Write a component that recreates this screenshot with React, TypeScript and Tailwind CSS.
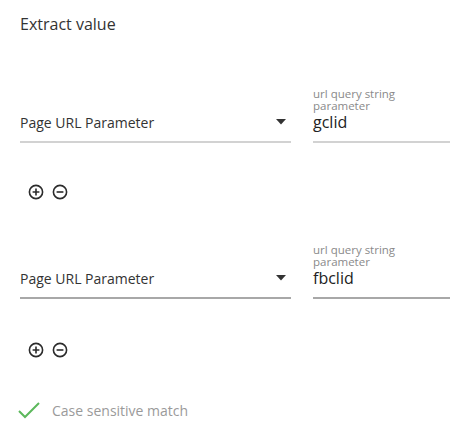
import React from "react";

function PlusCircle() {
  return (
    <svg width="16" height="16" viewBox="0 0 16 16" fill="none" stroke="#2b2b2b" strokeWidth="1.6">
      <circle cx="8" cy="8" r="6.6" />
      <path d="M8 4.6v6.8M4.6 8h6.8" />
    </svg>
  );
}
function MinusCircle() {
  return (
    <svg width="16" height="16" viewBox="0 0 16 16" fill="none" stroke="#2b2b2b" strokeWidth="1.6">
      <circle cx="8" cy="8" r="6.6" />
      <path d="M4.6 8h6.8" />
    </svg>
  );
}

function Row({ value, line }: { value: string; line: string }) {
  return (
    <div className="flex items-end">
      <div className="w-[271px] shrink-0">
        <div className="flex items-center justify-between h-[20px] pr-[5px]">
          <span className="text-[14px] text-[#333]">Page URL Parameter</span>
          <svg width="10" height="6" viewBox="0 0 10 6"><path d="M0 0h10L5 5.5z" fill="#333" /></svg>
        </div>
        <div className={`mt-[9px] h-[2px] ${line}`} />
      </div>
      <div className="ml-[22px] flex-1">
        <div className="text-[11.5px] leading-[12px] text-[#8a8a8a]">url query string<br />parameter</div>
        <div className="h-[20px] leading-[20px] text-[16px] text-[#222]">{value}</div>
        <div className={`mt-[9px] h-[2px] ${line}`} />
      </div>
    </div>
  );
}

function Icons() {
  return (
    <div className="flex gap-[8px] pl-[8px]">
      <PlusCircle />
      <MinusCircle />
    </div>
  );
}

export default function App() {
  return (
    <div className="w-[450px] h-[435px] bg-white overflow-hidden pl-[20px]" style={{ fontFamily: '"Open Sans", sans-serif' }}>
      <div className="pt-[12px] text-[16px] leading-[24px] text-[#333]">Extract value</div>
      <div className="mt-[52px]"><Row value="gclid" line="bg-[#d2d2d2]" /></div>
      <div className="mt-[41px]"><Icons /></div>
      <div className="mt-[44px]"><Row value="fbclid" line="bg-[#a8a8a8]" /></div>
      <div className="mt-[43px]"><Icons /></div>
      <div className="mt-[40px] flex items-center h-[24px] -ml-[3px]">
        <svg width="24" height="20" viewBox="0 0 24 20" fill="none" stroke="#5cb85c" strokeWidth="2">
          <path d="M2 11l6 6L22 3" />
        </svg>
        <span className="ml-[11px] text-[14px] text-[#9a9a9a]">Case sensitive match</span>
      </div>
    </div>
  );
}
